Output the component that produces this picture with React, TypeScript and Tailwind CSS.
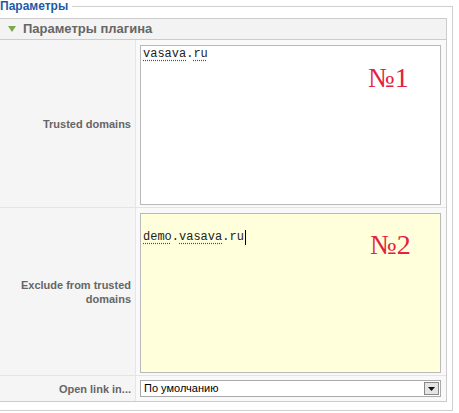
import React from "react";

const label = "text-[11px] leading-[14px] font-bold text-[#666] text-right";

function Spell({ children }: { children: React.ReactNode }) {
  return (
    <span className="underline decoration-dotted decoration-[#e0102a] underline-offset-[3px]">
      {children}
    </span>
  );
}

export default function App() {
  return (
    <div className="bg-white w-[459px] h-[413px] overflow-hidden" style={{ fontFamily: '"Liberation Sans", Arial, sans-serif' }}>
      <fieldset className="m-0 w-[453px] border border-l-0 border-[#cfcfcf] pl-0 pr-[5px] pt-[6px] pb-[8px]">
        <legend className="p-0 pr-[4px] text-[12px] leading-[12px] font-bold text-[#1d5aa8]">Параметры</legend>

        <div className="w-[447px] border-r border-b border-[#cccccc]">
          <div className="flex h-[22px] items-center gap-[7px] border-y border-[#cccccc] bg-[#f3f3f3] pl-[8px]">
            <svg width="8" height="6" viewBox="0 0 8 6">
              <path d="M0 0h8L4 6z" fill="#7aa84a" />
            </svg>
            <span className="text-[13px] font-bold text-[#666]">Параметры плагина</span>
          </div>

          <div className="flex border-b border-[#e4e4e4]">
            <div className={`flex w-[136px] items-center justify-end border-r border-[#e6e6e6] bg-[#f5f5f5] pr-[4px] ${label}`}>
              Trusted domains
            </div>
            <div className="flex-1 bg-[#f9f9f9] pl-[4px] pr-[5px] pt-[5px] pb-[2px]">
              <div className="relative h-[160px] w-[301px] border border-[#b9b9b9] bg-white px-[2px] pt-[1px]">
                <div className="text-[12px] leading-[14px] text-[#222]" style={{ fontFamily: '"Liberation Mono", "Courier New", monospace' }}>
                  <Spell>vasava</Spell>.<Spell>ru</Spell>
                </div>
                <span className="absolute left-[227px] top-[16px] text-[28px] leading-[32px] text-[#e42140]" style={{ fontFamily: '"Liberation Serif", "Times New Roman", serif' }}>
                  №1
                </span>
              </div>
            </div>
          </div>

          <div className="flex border-b border-[#e4e4e4]">
            <div className={`flex w-[136px] items-center justify-end border-r border-[#e6e6e6] bg-[#f5f5f5] pr-[4px] ${label}`}>
              <span>
                Exclude from trusted
                <br />
                domains
              </span>
            </div>
            <div className="flex-1 bg-[#f9f9f9] pl-[4px] pr-[5px] pt-[5px] pb-[2px]">
              <div className="relative h-[160px] w-[301px] border border-[#b9b9b9] bg-[#ffffdc] px-[2px] pt-[16px]">
                <div className="flex text-[12px] leading-[14px] text-[#222]" style={{ fontFamily: '"Liberation Mono", "Courier New", monospace' }}>
                  <span>
                    <Spell>demo</Spell>.<Spell>vasava</Spell>.ru
                  </span>
                  <span className="ml-[1px] h-[15px] w-[1px] bg-black" />
                </div>
                <span className="absolute left-[229px] top-[15px] text-[28px] leading-[32px] text-[#e42140]" style={{ fontFamily: '"Liberation Serif", "Times New Roman", serif' }}>
                  №2
                </span>
              </div>
            </div>
          </div>

          <div className="flex">
            <div className={`flex w-[136px] items-center justify-end border-r border-[#e6e6e6] bg-[#f5f5f5] pr-[4px] ${label}`}>
              Open link in...
            </div>
            <div className="flex-1 bg-[#f9f9f9] pl-[4px] pr-[5px] py-[4px]">
              <div className="flex h-[17px] w-[301px] items-center justify-between border border-[#a9a9a9] bg-white pl-[3px] pr-[1px]">
                <span className="text-[11px] leading-[13px] text-black">По умолчанию</span>
                <span className="flex h-[13px] w-[15px] items-center justify-center border border-[#888] bg-[#e4e4e4]">
                  <svg width="7" height="4" viewBox="0 0 7 4">
                    <path d="M0 0h7L3.5 4z" fill="#111" />
                  </svg>
                </span>
              </div>
            </div>
          </div>
        </div>
      </fieldset>
    </div>
  );
}
